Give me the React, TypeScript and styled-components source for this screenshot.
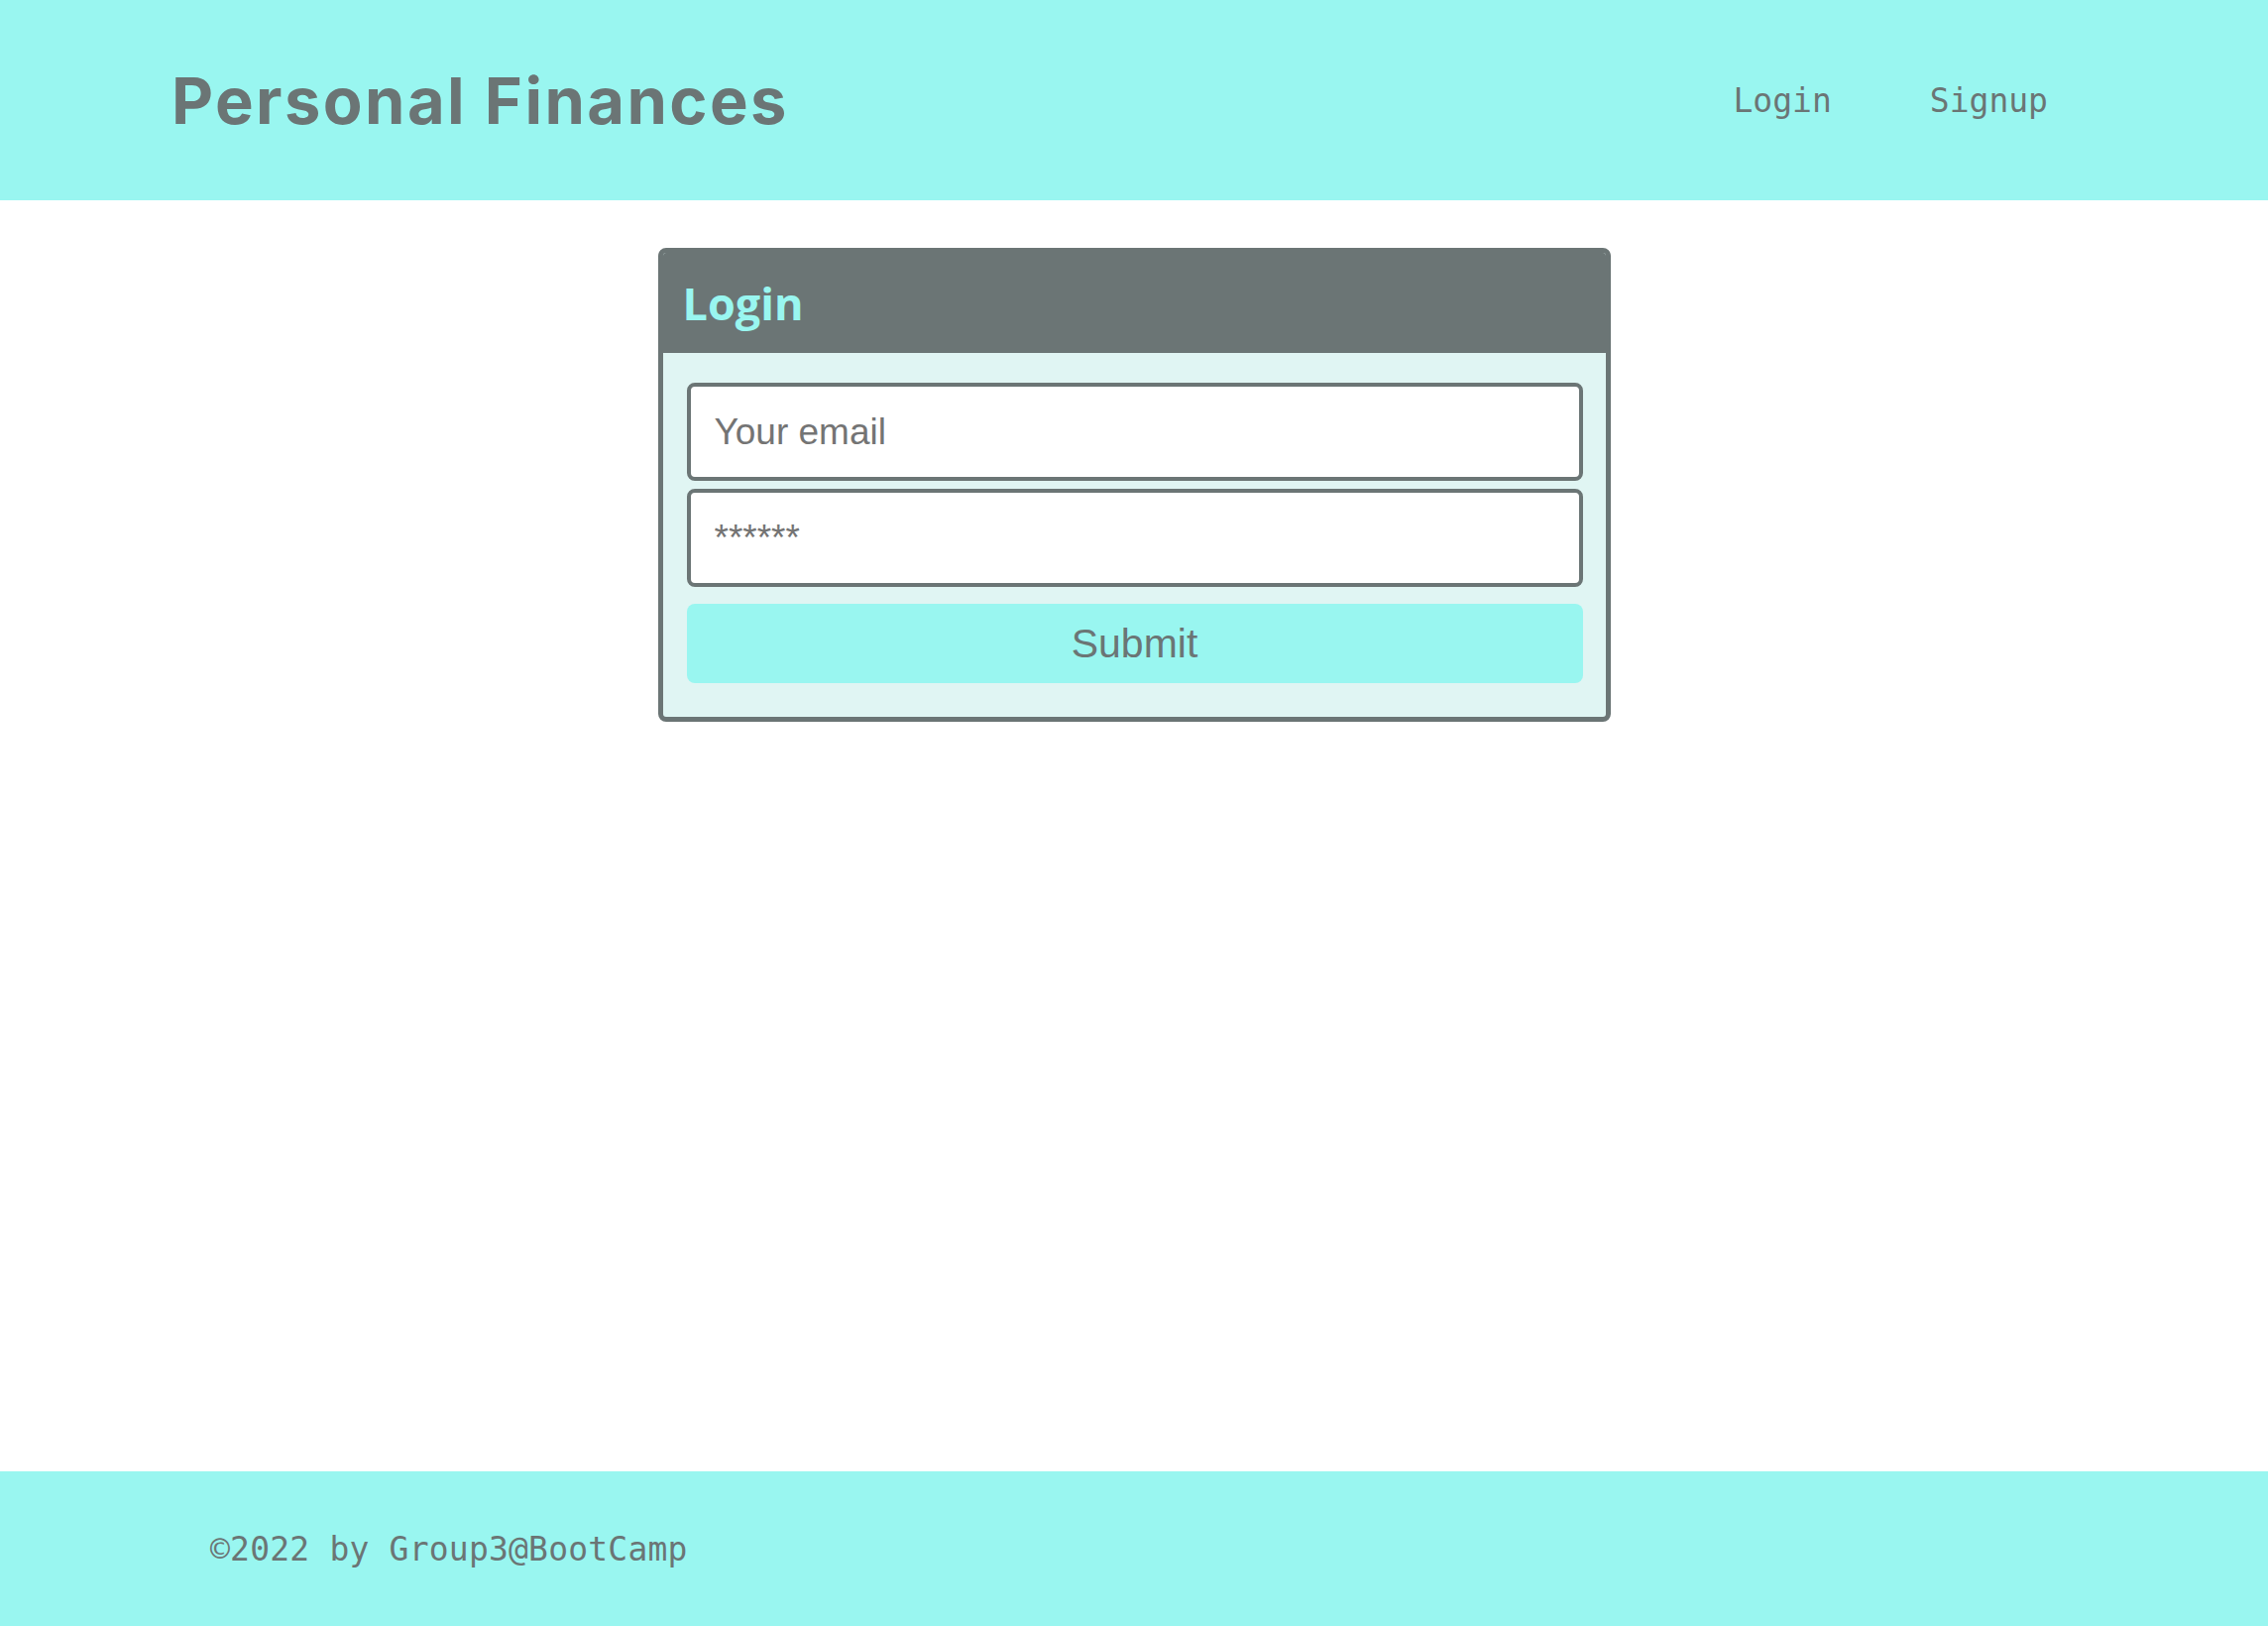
import React from "react";
import styled, { createGlobalStyle } from "styled-components";

const GRAY = "#6b7575";
const CYAN = "#99f6f0";
const PALE = "#e0f5f3";

const GlobalStyle = createGlobalStyle`
  html, body { margin: 0; padding: 0; background: #ffffff; }
  * { box-sizing: border-box; }
`;

const Page = styled.div`
  min-height: 100vh;
  display: flex;
  flex-direction: column;
`;

const Header = styled.header`
  height: 202px;
  background: ${CYAN};
  display: flex;
  align-items: center;
  justify-content: space-between;
  padding: 0 222px 0 173px;
`;

const Brand = styled.h1`
  margin: 0;
  font-family: Inter, "Noto Sans", sans-serif;
  font-weight: 700;
  font-size: 65px;
  letter-spacing: 2.4px;
  color: ${GRAY};
`;

const Nav = styled.nav`
  display: flex;
  gap: 99px;
`;

const NavLink = styled.a`
  font-family: "DejaVu Sans Mono", "Liberation Mono", monospace;
  font-size: 33px;
  color: ${GRAY};
  text-decoration: none;
  cursor: pointer;
`;

const Main = styled.main`
  flex: 1;
  display: flex;
  justify-content: center;
  align-items: flex-start;
  padding-top: 48px;
`;

const Card = styled.section`
  width: 961px;
  border: 5px solid ${GRAY};
  border-radius: 8px;
  background: ${PALE};
  overflow: hidden;
`;

const CardHeader = styled.div`
  height: 101px;
  background: ${GRAY};
  display: flex;
  align-items: center;
  padding-left: 20px;
`;

const CardTitle = styled.h2`
  margin: 0;
  font-family: "Open Sans", sans-serif;
  font-weight: 700;
  font-size: 45px;
  color: ${CYAN};
`;

const Form = styled.form`
  display: flex;
  flex-direction: column;
  gap: 8px;
  padding: 30px 23px 34px 24px;
`;

const Input = styled.input`
  height: 99px;
  width: 100%;
  border: 4px solid ${GRAY};
  border-radius: 8px;
  background: #ffffff;
  padding: 0 24px;
  font-family: "Liberation Sans", Arial, sans-serif;
  font-size: 37px;
  color: ${GRAY};
  outline: none;
  &::placeholder { color: #747474; }
`;

const SubmitButton = styled.button`
  margin-top: 9px;
  height: 80px;
  width: 100%;
  border: none;
  border-radius: 8px;
  background: ${CYAN};
  font-family: "Liberation Sans", Arial, sans-serif;
  font-size: 41px;
  color: ${GRAY};
  cursor: pointer;
`;

const Footer = styled.footer`
  height: 156px;
  background: ${CYAN};
  display: flex;
  align-items: center;
  padding-left: 212px;
`;

const FooterText = styled.p`
  margin: 0;
  font-family: "DejaVu Sans Mono", "Liberation Mono", monospace;
  font-size: 33px;
  letter-spacing: 0.2px;
  color: ${GRAY};
`;

export default function App() {
  return (
    <>
      <GlobalStyle />
      <Page>
        <Header>
          <Brand>Personal Finances</Brand>
          <Nav>
            <NavLink>Login</NavLink>
            <NavLink>Signup</NavLink>
          </Nav>
        </Header>
        <Main>
          <Card>
            <CardHeader>
              <CardTitle>Login</CardTitle>
            </CardHeader>
            <Form onSubmit={(e) => e.preventDefault()}>
              <Input type="email" placeholder="Your email" />
              <Input type="password" placeholder="******" />
              <SubmitButton type="submit">Submit</SubmitButton>
            </Form>
          </Card>
        </Main>
        <Footer>
          <FooterText>©2022 by Group3@BootCamp</FooterText>
        </Footer>
      </Page>
    </>
  );
}
